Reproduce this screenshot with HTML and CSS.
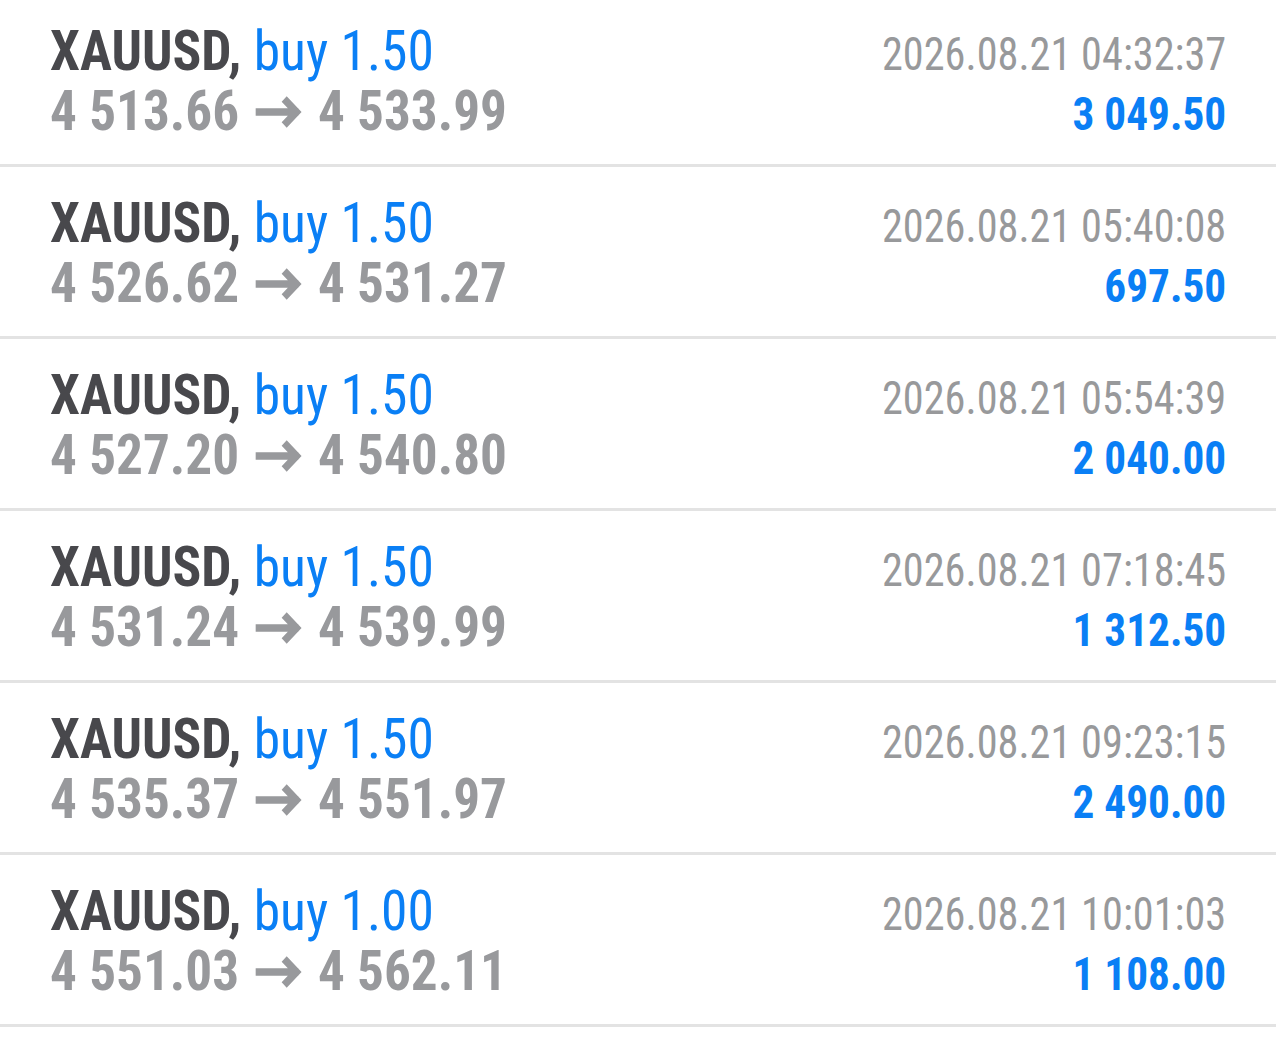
FILE: index.html
```html
<!DOCTYPE html>
<html lang="en">
<head>
  <meta charset="UTF-8">
  <title>History</title>
  <link rel="stylesheet" href="styles.css">
</head>
<body>
<div class="deals">
  <div class="deal">
    <div class="title"><span class="symbol">XAUUSD,</span> <span class="type">buy 1.50</span></div>
    <div class="time">2026.08.21 04:32:37</div>
    <div class="prices">4 513.66<svg class="arrow" viewBox="0 0 50 32"><path d="M0 16H45M30 3L43 16L30 29"/></svg>4 533.99</div>
    <div class="profit">3 049.50</div>
  </div>
  <div class="deal">
    <div class="title"><span class="symbol">XAUUSD,</span> <span class="type">buy 1.50</span></div>
    <div class="time">2026.08.21 05:40:08</div>
    <div class="prices">4 526.62<svg class="arrow" viewBox="0 0 50 32"><path d="M0 16H45M30 3L43 16L30 29"/></svg>4 531.27</div>
    <div class="profit">697.50</div>
  </div>
  <div class="deal">
    <div class="title"><span class="symbol">XAUUSD,</span> <span class="type">buy 1.50</span></div>
    <div class="time">2026.08.21 05:54:39</div>
    <div class="prices">4 527.20<svg class="arrow" viewBox="0 0 50 32"><path d="M0 16H45M30 3L43 16L30 29"/></svg>4 540.80</div>
    <div class="profit">2 040.00</div>
  </div>
  <div class="deal">
    <div class="title"><span class="symbol">XAUUSD,</span> <span class="type">buy 1.50</span></div>
    <div class="time">2026.08.21 07:18:45</div>
    <div class="prices">4 531.24<svg class="arrow" viewBox="0 0 50 32"><path d="M0 16H45M30 3L43 16L30 29"/></svg>4 539.99</div>
    <div class="profit">1 312.50</div>
  </div>
  <div class="deal">
    <div class="title"><span class="symbol">XAUUSD,</span> <span class="type">buy 1.50</span></div>
    <div class="time">2026.08.21 09:23:15</div>
    <div class="prices">4 535.37<svg class="arrow" viewBox="0 0 50 32"><path d="M0 16H45M30 3L43 16L30 29"/></svg>4 551.97</div>
    <div class="profit">2 490.00</div>
  </div>
  <div class="deal">
    <div class="title"><span class="symbol">XAUUSD,</span> <span class="type">buy 1.00</span></div>
    <div class="time">2026.08.21 10:01:03</div>
    <div class="prices">4 551.03<svg class="arrow" viewBox="0 0 50 32"><path d="M0 16H45M30 3L43 16L30 29"/></svg>4 562.11</div>
    <div class="profit">1 108.00</div>
  </div>
</div>
</body>
</html>
```

FILE: styles.css
```css
body {
    margin: 0;
    background: #ffffff;
    font-family: Roboto, "Liberation Sans", sans-serif;
    font-stretch: condensed;
    overflow: hidden;
}

/* список сделок, первая строка чуть обрезана сверху */
.deals {
    margin-top: -5px;
}

.deal {
    display: grid;
    grid-template-columns: 1fr auto;
    grid-template-rows: 60px 60px;
    align-items: baseline;
    box-sizing: border-box;
    height: 172px;
    padding: 26px 50px 0 50px;
    border-bottom: 3px solid #e3e3e3;
    line-height: 60px;
}

/* дожимаем по горизонтали до condensed-ширины */
.title {
    font-size: 56px;
    white-space: nowrap;
    transform: scaleX(0.955);
    transform-origin: left;
}

.symbol {
    font-weight: 700;
    color: #48484c;
}

.type {
    color: #0a7ff5;
}

.prices {
    font-size: 56px;
    font-weight: 700;
    color: #98999c;
    white-space: nowrap;
    transform: scaleX(0.95);
    transform-origin: left;
}

.arrow {
    width: 53px;
    height: 32px;
    margin: 0 14px 0 16px;
    vertical-align: 2px;
    fill: none;
    stroke: #98999c;
    stroke-width: 7.5;
}

.time {
    font-size: 46px;
    color: #98999b;
    text-align: right;
    transform: scaleX(0.92);
    transform-origin: right;
}

.profit {
    font-size: 46px;
    font-weight: 700;
    color: #0a7ff5;
    text-align: right;
    transform: scaleX(0.94);
    transform-origin: right;
}
```
